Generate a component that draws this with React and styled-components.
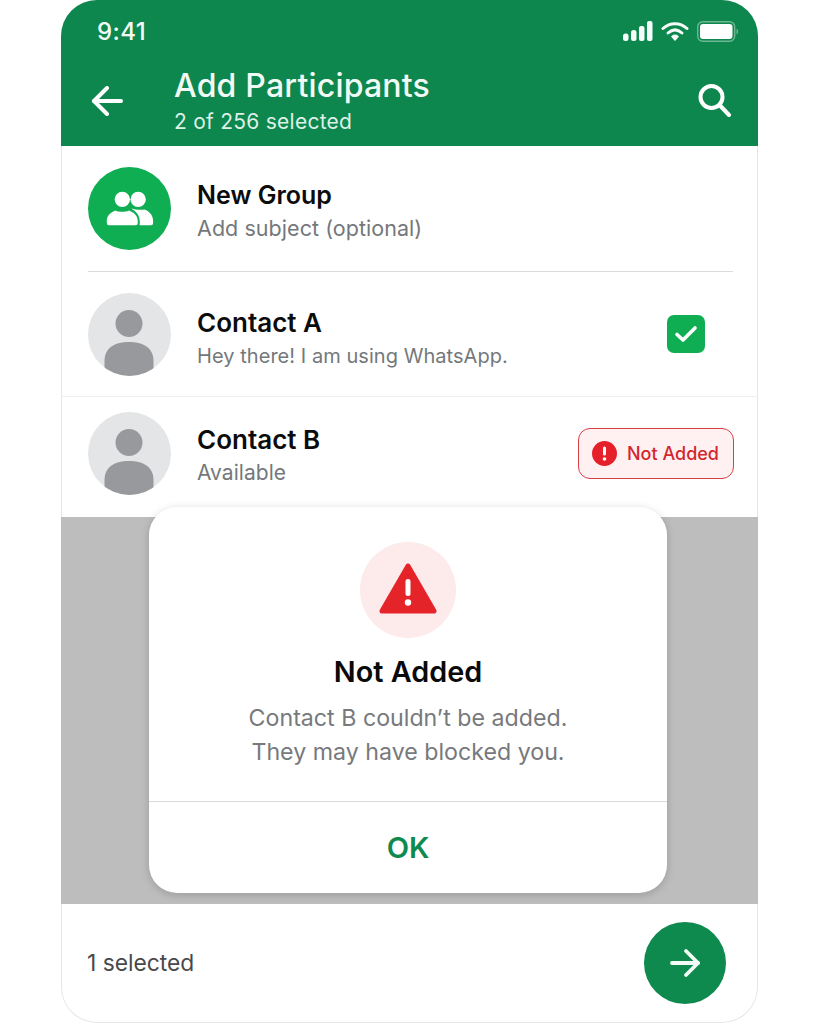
import React from "react";
import styled, { createGlobalStyle } from "styled-components";

const Global = createGlobalStyle`
  html, body { margin: 0; padding: 0; background: #fff; }
  * { box-sizing: border-box; }
  body { font-family: Inter, "Liberation Sans", sans-serif; -webkit-font-smoothing: antialiased; }
`;
const Page = styled.div`
  width: 819px; height: 1024px; padding-left: 61px; overflow: hidden;
`;
const Phone = styled.div`
  position: relative; width: 697px; height: 1023px; border-radius: 36px;
  overflow: hidden; display: flex; flex-direction: column; background: #fff;
  box-shadow: inset 0 0 0 1px #e6e6e6;
`;
const Header = styled.header`
  height: 146px; background: #0d874e; color: #fff; flex: none;
  display: flex; flex-direction: column;
`;
const StatusBar = styled.div`
  height: 62px; padding: 0 20px 0 36px; display: flex; align-items: center; justify-content: space-between;
`;
const Time = styled.span`font-size: 24px; font-weight: 500; letter-spacing: 0.4px; color: #f3faf6;`;
const StatusIcons = styled.div`display: flex; align-items: center; gap: 8px;`;
const TitleBar = styled.div`
  flex: 1; display: flex; align-items: flex-start; padding: 0 26px 0 30px;
`;
const BackSlot = styled.div`width: 83px; padding-top: 24px; flex: none; display: flex;`;
const Titles = styled.div`flex: 1; display: flex; flex-direction: column; margin-top: 5px;`;
const Title = styled.div`font-size: 32px; font-weight: 500; line-height: 38px; letter-spacing: .2px; color: #f2faf6;`;
const Subtitle = styled.div`font-size: 21px; line-height: 28px; margin-top: 3px; color: #def0e7; letter-spacing: .25px;`;
const SearchSlot = styled.div`padding-top: 22px; display: flex;`;
const Row = styled.div`
  height: ${p => p.$h}px; flex: none; padding: 0 24px ${p => p.$pb || 0}px 27px; display: flex; align-items: center; gap: 26px;
  position: relative;
  border-bottom: ${p => p.$line ? "1px solid #ededed" : "none"};
`;
const InsetLine = styled.div`height: 1px; flex: none; margin: 0 25px 0 27px; background: #dcdcdc;`;
const AvatarCircle = styled.div`
  width: 83px; height: 83px; border-radius: 50%; flex: none; overflow: hidden;
  background: ${p => p.$green ? "#10ae53" : "#e3e5e7"}; display: flex; align-items: center; justify-content: center;
`;
const RowText = styled.div`flex: 1; display: flex; flex-direction: column; min-width: 0; margin-top: ${p => p.$top || 0}px;`;
const Name = styled.div`font-size: ${p => p.$size || 26}px; font-weight: 600; line-height: 32px; color: #0c0c0c;`;
const Sub = styled.div`font-size: ${p => p.$size || 20}px; line-height: 28px; margin-top: 3px; color: #74787b; letter-spacing: .05px;`;
const Check = styled.div`
  width: 38px; height: 38px; margin: 0 29px 0 0; border-radius: 7px; background: #10ae53;
  display: flex; align-items: center; justify-content: center;
`;
const Badge = styled.div`
  width: 156px; height: 51px; margin-top: -1px; border: 1.75px solid #d83f46; border-radius: 12px; background: #fff1f1;
  display: flex; align-items: center; gap: 10px; padding-left: 13px; flex: none;
  font-size: 18px; font-weight: 500; color: #d4262e; white-space: nowrap;
`;
const Dim = styled.div`flex: 1; background: #bdbdbd; position: relative;`;
const Modal = styled.div`
  position: absolute; left: 88px; top: -10px; width: 518px; height: 386px; border-radius: 28px;
  background: #fff; box-shadow: 0 2px 8px rgba(0,0,0,.18);
  display: flex; flex-direction: column; align-items: center;
`;
const AlertCircle = styled.div`
  width: 96px; height: 96px; margin-top: 35px; border-radius: 50%; background: #fdeaea; flex: none;
  display: flex; align-items: center; justify-content: center;
`;
const ModalTitle = styled.div`font-size: 28.800px; font-weight: 600; line-height: 36px; margin-top: 16px; color: #0a0a0a;`;
const ModalBody = styled.div`
  font-size: 23.200px; line-height: 34px; margin-top: 11px; color: #77797c; text-align: center; flex: 1;
`;
const OkButton = styled.div`
  align-self: stretch; height: 92px; flex: none; border-top: 1px solid #d9d9d9;
  display: flex; align-items: center; justify-content: center;
  font-size: 29px; font-weight: 600; color: #0e8a4f;
`;
const Footer = styled.footer`
  height: 119px; flex: none; padding: 0 32px 2px 26px; display: flex; align-items: center; justify-content: space-between;
`;
const Count = styled.div`font-size: 22.800px; color: #48494b;`;
const Fab = styled.div`
  width: 82px; height: 82px; border-radius: 50%; background: #0e8a4f; display: flex; align-items: center; justify-content: center;
`;

const Person = () => (
  <svg width="83" height="83" viewBox="0 0 83 83">
    <circle cx="41" cy="30.500" r="13.500" fill="#97999c" />
    <path d="M16.500 90V68C16.500 54 28 49 41 49s24.500 5 24.500 19v22z" fill="#97999c" />
  </svg>
);
const Group = () => (
  <svg width="48" height="35" viewBox="0 0 50 36" fill="#fff">
    <circle cx="17" cy="8.500" r="8" />
    <path d="M1 34c-1-8 2-11 9-14 3 2 10 2 14 0 7 3 10 7 9 14 0 .8-1 1.500-2 1.500H3c-1 0-2-.7-2-1.500z" />
    <circle cx="33.500" cy="8.500" r="8" />
    <path d="M27 18c2 1 10 2 13 1 6 2 10 7 9 15 0 .8-1 1.500-2 1.500H35c1-7-1-13-8-17z" />
  </svg>
);

export default function App() {
  return (
    <Page>
      <Global />
      <Phone>
        <Header>
          <StatusBar>
            <Time>9:41</Time>
            <StatusIcons>
              <svg width="30" height="20" viewBox="0 0 30 20" fill="#f5fbf8">
                <rect x="0" y="12.500" width="5.500" height="7.500" rx="2.500" />
                <rect x="8" y="9" width="5.500" height="11" rx="2.500" />
                <rect x="16" y="5" width="5.500" height="15" rx="2" />
                <rect x="24" y="0" width="5.500" height="20" rx="2" />
              </svg>
              <svg width="28" height="20" viewBox="0 0 28 20" fill="none" stroke="#f5fbf8" strokeWidth="3" strokeLinecap="round">
                <path d="M2 7.500C9 1 19 1 26 7.500" />
                <path d="M7 12c4.500-4 9.500-4 14 0" />
                <path d="M11 15.500c2-1.500 4-1.500 6 0L14 19z" fill="#f5fbf8" strokeWidth="1.500" strokeLinejoin="round" />
              </svg>
              <svg width="41" height="21" viewBox="0 0 41 21" fill="none">
                <rect x=".7" y=".7" width="37" height="19.500" rx="5" stroke="#6db893" strokeWidth="1.400" />
                <rect x="3" y="3" width="32.500" height="15" rx="3" fill="#fff" />
                <path d="M39.500 7.500c1 .5 1.500 1.500 1.500 3s-.5 2.500-1.500 3z" fill="#6db893" />
              </svg>
            </StatusIcons>
          </StatusBar>
          <TitleBar>
            <BackSlot>
              <svg width="32" height="30" viewBox="0 0 32 30" fill="none" stroke="#fff" strokeWidth="4" strokeLinecap="round" strokeLinejoin="round">
                <path d="M30 15H3" /><path d="M16 2 3 15l13 13" />
              </svg>
            </BackSlot>
            <Titles>
              <Title>Add Participants</Title>
              <Subtitle>2 of 256 selected</Subtitle>
            </Titles>
            <SearchSlot>
              <svg width="34" height="33" viewBox="0 0 34 33" fill="none" stroke="#fff" strokeWidth="4" strokeLinecap="round">
                <circle cx="13.500" cy="13" r="11" /><path d="M22 21.500 31 31" />
              </svg>
            </SearchSlot>
          </TitleBar>
        </Header>
        <Row $h={125}>
          <AvatarCircle $green><Group /></AvatarCircle>
          <RowText $top={4}>
            <Name $size={25}>New Group</Name>
            <Sub $size={21.500}>Add subject (optional)</Sub>
          </RowText>
        </Row>
        <InsetLine />
        <Row $h={125} $line>
          <AvatarCircle><Person /></AvatarCircle>
          <RowText $top={8}>
            <Name>Contact A</Name>
            <Sub>Hey there! I am using WhatsApp.</Sub>
          </RowText>
          <Check>
            <svg width="24" height="20" viewBox="0 0 24 20" fill="none" stroke="#fff" strokeWidth="3.600" strokeLinecap="round" strokeLinejoin="round">
              <path d="M3 10.500 9 16 21 4" />
            </svg>
          </Check>
        </Row>
        <Row $h={120} $pb={7}>
          <AvatarCircle><Person /></AvatarCircle>
          <RowText $top={4}>
            <Name>Contact B</Name>
            <Sub $size={21}>Available</Sub>
          </RowText>
          <Badge>
            <svg width="25" height="25" viewBox="0 0 25 25">
              <circle cx="12.500" cy="12.500" r="12.500" fill="#e5202a" />
              <rect x="11" y="5.500" width="3" height="9" rx="1.500" fill="#fff" />
              <circle cx="12.500" cy="18" r="1.800" fill="#fff" />
            </svg>
            Not Added
          </Badge>
        </Row>
        <Dim>
          <Modal>
            <AlertCircle>
              <svg width="58" height="54" viewBox="0 0 58 54">
                <path d="M29 3 55 48H3z" fill="#e5242a" stroke="#e5242a" strokeWidth="5" strokeLinejoin="round" />
                <rect x="26.500" y="16" width="5" height="17" rx="2.500" fill="#fff" />
                <circle cx="29" cy="39.500" r="3.200" fill="#fff" />
              </svg>
            </AlertCircle>
            <ModalTitle>Not Added</ModalTitle>
            <ModalBody>Contact B couldn’t be added.<br />They may have blocked you.</ModalBody>
            <OkButton>OK</OkButton>
          </Modal>
        </Dim>
        <Footer>
          <Count>1 selected</Count>
          <Fab>
            <svg width="32" height="30" viewBox="0 0 32 30" fill="none" stroke="#f4fbf7" strokeWidth="3.800" strokeLinecap="round" strokeLinejoin="round">
              <path d="M3 15h26" /><path d="M17 3l12 12-12 12" />
            </svg>
          </Fab>
        </Footer>
      </Phone>
    </Page>
  );
}
